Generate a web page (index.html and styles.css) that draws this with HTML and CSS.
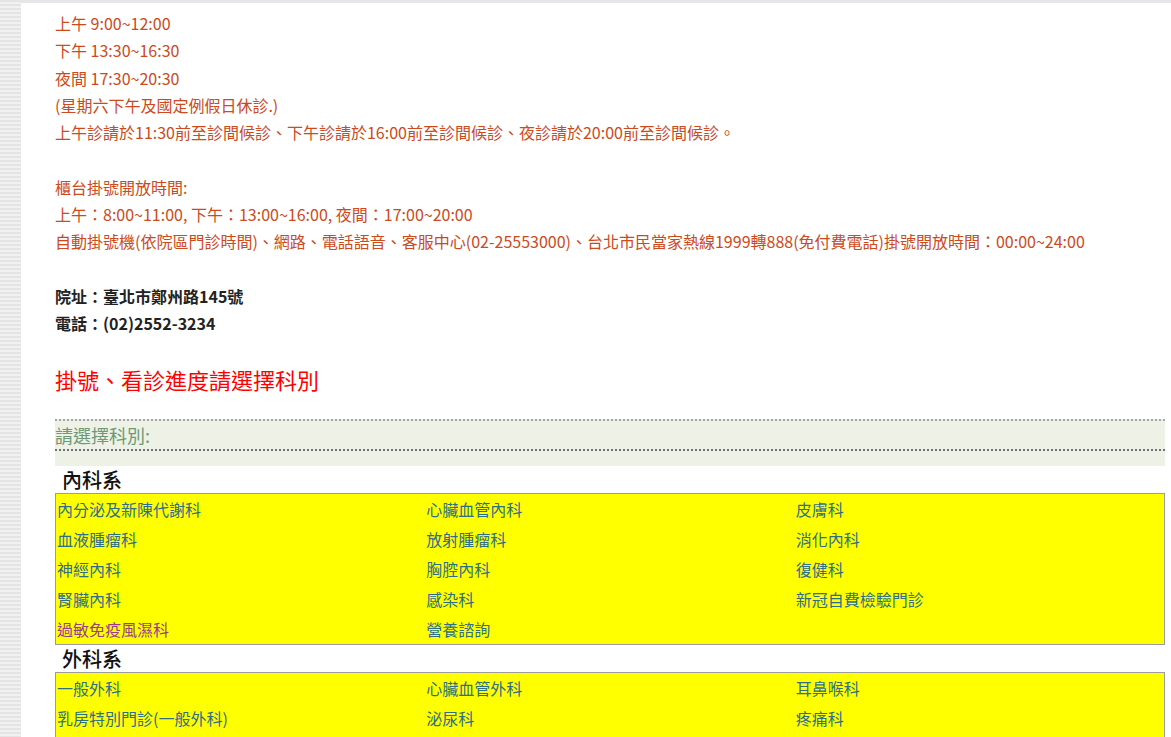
FILE: index.html
```html
<!DOCTYPE html>
<html lang="zh-Hant">

<head>
  <meta charset="UTF-8">
  <meta name="viewport" content="width=device-width, initial-scale=1.0">
  <title>門診時間</title>
  <link rel="stylesheet" href="styles.css">
</head>

<body>
  <div class="page">
    <div class="side"></div>
    <div class="main">
      <div class="info">
        <p>上午 9:00~12:00</p>
        <p>下午 13:30~16:30</p>
        <p>夜間 17:30~20:30</p>
        <p>(星期六下午及國定例假日休診.)</p>
        <p>上午診請於11:30前至診間候診、下午診請於16:00前至診間候診、夜診請於20:00前至診間候診。</p>
        <p class="blank"></p>
        <p>櫃台掛號開放時間:</p>
        <p>上午：8:00~11:00, 下午：13:00~16:00, 夜間：17:00~20:00</p>
        <p>自動掛號機(依院區門診時間)、網路、電話語音、客服中心(02-25553000)、台北市民當家熱線1999轉888(免付費電話)掛號開放時間：00:00~24:00</p>
        <p class="blank"></p>
        <p class="addr">院址：臺北市鄭州路145號</p>
        <p class="addr">電話：(02)2552-3234</p>
      </div>

      <h2 class="title">掛號、看診進度請選擇科別</h2>

      <div class="pick">
        <h3>請選擇科別:</h3>
      </div>

      <div class="group">
        <h4>內科系</h4>
        <div class="depts">
          <a href="#">內分泌及新陳代謝科</a>
          <a href="#">心臟血管內科</a>
          <a href="#">皮膚科</a>
          <a href="#">血液腫瘤科</a>
          <a href="#">放射腫瘤科</a>
          <a href="#">消化內科</a>
          <a href="#">神經內科</a>
          <a href="#">胸腔內科</a>
          <a href="#">復健科</a>
          <a href="#">腎臟內科</a>
          <a href="#">感染科</a>
          <a href="#">新冠自費檢驗門診</a>
          <a href="#" class="visited">過敏免疫風濕科</a>
          <a href="#">營養諮詢</a>
          <span></span>
        </div>
      </div>

      <div class="group">
        <h4>外科系</h4>
        <div class="depts">
          <a href="#">一般外科</a>
          <a href="#">心臟血管外科</a>
          <a href="#">耳鼻喉科</a>
          <a href="#">乳房特別門診(一般外科)</a>
          <a href="#">泌尿科</a>
          <a href="#">疼痛科</a>
          <span></span>
          <span></span>
          <span></span>
        </div>
      </div>
    </div>
  </div>
</body>

</html>
```

FILE: styles.css
```css
body {
  margin: 0;
  padding: 0;
  background-color: #fff;
  font-family: "Noto Sans CJK TC", "Open Sans", sans-serif;
  overflow: hidden;
}

.page {
  display: flex;
  min-height: 100vh;
}

.side {
  width: 21px;
  flex-shrink: 0;
  background-image: repeating-linear-gradient(#e4e4e4 0, #e4e4e4 2px, #f1f1f1 2px, #f1f1f1 4px);
}

.main {
  flex: 1;
  border-top: 3px solid #e6e6ea;
  padding: 7px 6px 0 34px;
}

.info p {
  margin: 0;
  font-size: 16px;
  line-height: 27.3px;
  color: #cc4a1c;
  white-space: nowrap;
}

.info .blank {
  height: 27.3px;
}

.info .addr {
  color: #222;
  font-weight: bold;
}

.title {
  margin: 26px 0 0;
  font-size: 22px;
  line-height: 30px;
  font-weight: normal;
  color: #f00;
}

.pick {
  margin-top: 25px;
  background-color: #eef1e6;
  padding-bottom: 15px;
}

.pick h3 {
  margin: 0;
  font-size: 18px;
  line-height: 28px;
  font-weight: normal;
  color: #6a9a77;
  border-top: 2px dotted #a4a4a4;
  border-bottom: 2px dotted #6f6f6f;
}

.group h4 {
  margin: 0;
  padding-left: 7px;
  font-size: 20px;
  line-height: 27px;
  font-weight: 500;
  color: #111;
}

.depts {
  display: grid;
  grid-template-columns: repeat(3, 1fr);
  background-color: #ff0;
  border: 1px solid #9c9c9c;
}

.depts a,
.depts span {
  padding-left: 1px;
  font-size: 16px;
  line-height: 30px;
  height: 30px;
  color: #2f6f86;
  text-decoration: none;
}

.depts a.visited {
  color: #9a3d8e;
}
```
